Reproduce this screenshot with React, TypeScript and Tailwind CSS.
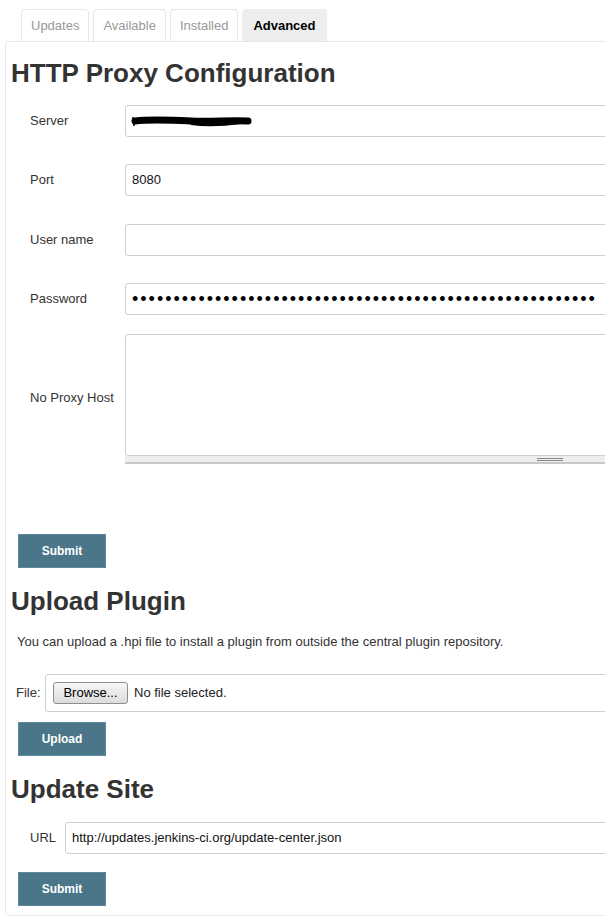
const font = { fontFamily: '"Liberation Sans", Arial, sans-serif' };

const tabs = [
  { name: "Updates", active: false },
  { name: "Available", active: false },
  { name: "Installed", active: false },
  { name: "Advanced", active: true },
];

function Field({ label, children, className = "" }: { label: string; children?: React.ReactNode; className?: string }) {
  return (
    <div className={`flex items-center ${className}`}>
      <div className="w-[119px] shrink-0 pl-[24px] text-[13px] text-[#333]">{label}</div>
      <div className="flex h-[32px] flex-1 items-center rounded-[3px] border border-[#cfcfcf] bg-white pl-[6px] text-[13px] text-[#111]">
        {children}
      </div>
    </div>
  );
}

function BlueButton({ label, className = "" }: { label: string; className?: string }) {
  return (
    <button className={`ml-[12px] block h-[34px] w-[88px] border border-[#5b8aa0] bg-[#4b7589] text-[12px] font-bold text-white ${className}`}>
      {label}
    </button>
  );
}

function Redacted() {
  return (
    <svg width="124" height="16" viewBox="0 0 124 16" className="-ml-[1px]">
      <path d="M2 4 L3 13" stroke="#000" strokeWidth="1.5" />
      <path d="M4 8 C20 6 40 7 60 8 C80 9 100 7 117 8" stroke="#000" strokeWidth="7" fill="none" strokeLinecap="round" />
      <path d="M60 10 C75 12 95 11 110 9" stroke="#000" strokeWidth="4" fill="none" />
    </svg>
  );
}

export default function App() {
  return (
    <div className="h-[920px] w-[605px] overflow-hidden bg-white" style={font}>
      {/* Tabs */}
      <div className="ml-[21px] flex gap-[4px] pt-[9px]">
        {tabs.map((t) => (
          <div
            key={t.name}
            className={`flex h-[32px] items-center rounded-t-[4px] text-[13px] ${
              t.active
                ? "border border-b-0 border-[#eeeeee] bg-[#eeeeee] px-[10px] font-bold text-black"
                : "border border-b-0 border-[#e6e6e6] px-[9px] text-[#999]"
            }`}
          >
            {t.name}
          </div>
        ))}
      </div>

      {/* Panel */}
      <div className="ml-[5px] w-[660px] rounded-[4px] border border-[#e6e6e6] pb-[9px]">
        <h1 className="mt-[16px] pl-[5px] text-[26px] font-bold leading-[30px] text-[#333]">HTTP Proxy Configuration</h1>

        <Field label="Server" className="mt-[17px]">
          <Redacted />
        </Field>
        <Field label="Port" className="mt-[27px]">
          8080
        </Field>
        <Field label="User name" className="mt-[28px]" />
        <Field label="Password" className="mt-[27px]">
          <span className="text-[18px] leading-none tracking-[2px] text-black">
            {"•".repeat(56)}
          </span>
        </Field>

        {/* No Proxy Host textarea */}
        <div className="mt-[19px] flex">
          <div className="flex w-[119px] shrink-0 items-center pb-[2px] pl-[24px] text-[13px] text-[#333]">No Proxy Host</div>
          <div className="flex-1">
            <div className="h-[122px] rounded-[3px] border border-[#cfcfcf] bg-white" />
            <div className="h-[8px] border-b-2 border-[#c8c8c8] bg-[#eeeeee] pt-[2px]">
              <div className="ml-[412px] h-[3px] w-[26px] border-y border-[#888]" />
            </div>
          </div>
        </div>

        <BlueButton label="Submit" className="mt-[70px]" />

        <h1 className="mt-[18px] pl-[5px] text-[26px] font-bold leading-[30px] text-[#333]">Upload Plugin</h1>
        <p className="mt-[18px] pl-[11px] text-[13px] leading-[16px] text-[#333]">
          You can upload a .hpi file to install a plugin from outside the central plugin repository.
        </p>

        <div className="mt-[24px] flex items-center pl-[10px]">
          <span className="w-[29px] text-[13px] text-[#333]">File:</span>
          <div className="flex h-[38px] flex-1 items-center gap-[6px] rounded-[3px] border border-[#cfcfcf] pl-[7px]">
            <button className="h-[22px] w-[75px] rounded-[3px] border border-[#8e8e8e] bg-gradient-to-b from-[#f6f6f6] to-[#dcdcdc] text-[13px] text-black">
              Browse...
            </button>
            <span className="text-[13px] text-[#222]">No file selected.</span>
          </div>
        </div>

        <BlueButton label="Upload" className="mt-[10px]" />

        <h1 className="mt-[18px] pl-[5px] text-[26px] font-bold leading-[30px] text-[#333]">Update Site</h1>

        <div className="mt-[18px] flex items-center">
          <div className="w-[59px] shrink-0 pl-[24px] text-[13px] text-[#333]">URL</div>
          <div className="flex h-[32px] flex-1 items-center rounded-[3px] border border-[#cfcfcf] pl-[6px] text-[13px] text-[#111]">
            http://updates.jenkins-ci.org/update-center.json
          </div>
        </div>

        <BlueButton label="Submit" className="mt-[18px]" />
      </div>
    </div>
  );
}
